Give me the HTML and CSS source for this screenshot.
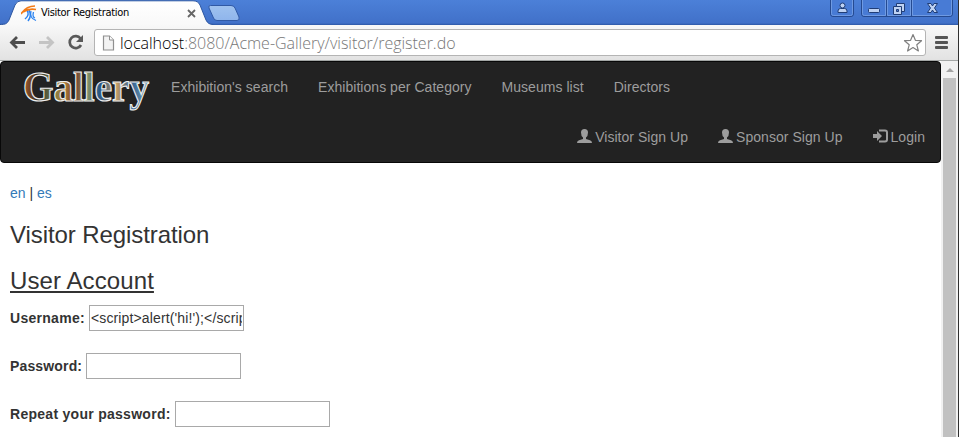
FILE: index.html
```html
<!DOCTYPE html>
<html lang="en">
<head>
<meta charset="utf-8">
<title>Visitor Registration</title>
<link rel="stylesheet" href="styles.css">
</head>
<body>
<div class="window">
  <header class="titlebar">
    <svg class="tab-shape" width="245" height="26" viewBox="0 0 245 26">
      <defs>
        <linearGradient id="tab" x1="0" y1="0" x2="0" y2="1"><stop offset="0" stop-color="#fff"/><stop offset="1" stop-color="#f8f8f8"/></linearGradient>
        <linearGradient id="newtab" x1="0" y1="0" x2="0" y2="1"><stop offset="0" stop-color="#9fc2ef"/><stop offset="1" stop-color="#8fb5ec"/></linearGradient>
      </defs>
      <path d="M0 24.5C5 24.5 7 24 9 20L15 5Q17 .8 21 .8H193Q198 .8 200 5L206 20Q208 24.5 213 24.5V26H0Z" fill="url(#tab)" stroke="#2d57a2"/>
      <path d="M0 25h214v1H0z" fill="#f8f8f8"/>
      <path d="M210.500 5.500H231Q234 5.500 235 8L239 17Q240 20.500 237 20.500H217Q214.500 20.500 213.500 18L209 8Q208 5.500 210.500 5.500Z" fill="url(#newtab)" stroke="#3059a5"/>
    </svg>
    <div class="tab">
      <svg class="favicon" width="17" height="17" viewBox="0 0 17 17" fill="none">
        <path d="M4 14Q9 10 6 5M7 16Q11 11 8 5" stroke="#2b83f0" stroke-width="1.500"/>
        <path d="M10 6Q8 13 15 15.500M12.500 7Q11 12 14 13" stroke="#2b83f0" stroke-width="1.300"/>
        <path d="M0 9Q5 1 14 1M2 7Q8 3 15 4.500" stroke="#f47b16" stroke-width="1.600"/>
      </svg>
      <span class="tab-title">Visitor Registration</span>
      <svg class="tab-close" width="9" height="9" viewBox="0 0 9 9"><path d="M1 1l7 7M8 1L1 8" stroke="#666" stroke-width="1.800"/></svg>
    </div>
    <svg class="window-buttons" width="130" height="18" viewBox="0 0 130 18">
      <g fill="#487bd5" stroke="#254a91">
        <path d="M1.500 -1V14Q1.500 16.500 4 16.500H22Q24.500 16.500 24.500 14V-1Z"/>
        <path d="M32.500 -1V14Q32.500 16.500 35 16.500H121Q123.500 16.500 123.500 14V-1Z"/>
        <path d="M57.500 0V16M82.500 0V16"/>
      </g>
      <g fill="none" stroke="#6f9ae2"><path d="M2.500 0V13.500Q2.500 15.500 4.500 15.500H21.500Q23.500 15.500 23.500 13.500V0M33.500 0V13.500Q33.500 15.500 35.500 15.500H56.500V0M58.500 0V15.500H81.500V0M83.500 0V15.500H120.500Q122.500 15.500 122.500 13.500V0"/></g>
      <g fill="#bed2f3" stroke="#203d76">
        <circle cx="13.500" cy="5.500" r="2.500"/><path d="M9 12.500V11Q9 8.500 11.500 8.500H15.500Q18 8.500 18 11V12.500Z"/>
        <rect x="39.500" y="8.500" width="11" height="4" rx="1"/>
        <path d="M67.500 3.500H75.500V11.500H67.500Z"/><path d="M64.500 6.500H72.500V14.500H64.500Z"/><path d="M67.500 9.500H69.500V11.500H67.500Z" fill="#487bd5"/>
        <path d="M98.500 3.500H102L103.500 6L105 3.500H108.500L105.500 8L108.500 12.500H105L103.500 10L102 12.500H98.500L101.500 8Z"/>
      </g>
    </svg>
  </header>
  <div class="toolbar">
    <svg class="nav-icons" width="94" height="35" viewBox="0 0 94 35" fill="none">
      <path d="M25 17.500H12M17 12l-5.500 5.500L17 23" stroke="#4d4d4d" stroke-width="2.800"/>
      <path d="M39 17.500H52M47 12l5.500 5.500L47 23" stroke="#c4c4c4" stroke-width="2.800"/>
      <path d="M80.500 13.500A6 6 0 1 0 81 20" stroke="#595959" stroke-width="2.700"/><path d="M83 10V17H76Z" fill="#595959"/>
    </svg>
    <div class="address">
      <svg class="page-icon" width="13" height="16" viewBox="0 0 13 16"><path d="M1.500 1H7.500L11.500 5V15H1.500Z" fill="#f3f3f3" stroke="#909090" stroke-width="1.200"/><path d="M7.500 1V5H11.500" fill="#fff" stroke="#909090"/></svg>
      <span class="url"><span class="host">localhost</span>:8080/Acme-Gallery/visitor/register.do</span>
      <svg class="star" width="20" height="20" viewBox="0 0 20 20"><path d="M10 1.500L12.400 7.300L18.500 7.700L13.800 11.800L15.400 18L10 14.600L4.600 18L6.200 11.800L1.500 7.700L7.600 7.300Z" fill="#fff" stroke="#808080" stroke-width="1.200" stroke-linejoin="round"/></svg>
    </div>
    <svg class="menu-icon" width="14" height="14" viewBox="0 0 14 14" fill="#555"><rect y="0" width="13" height="3" rx="1"/><rect y="5" width="13" height="3" rx="1"/><rect y="10" width="13" height="3" rx="1"/></svg>
  </div>
  <div class="viewport">
    <main class="page">
      <nav class="navbar">
        <div class="nav-row">
          <svg class="logo" width="150" height="50" viewBox="0 0 150 50">
            <defs><linearGradient id="art" gradientUnits="userSpaceOnUse" x1="22" y1="0" x2="148" y2="6"><stop offset="0" stop-color="#b8632d"/><stop offset=".12" stop-color="#342b20"/><stop offset=".24" stop-color="#67764c"/><stop offset=".33" stop-color="#b48336"/><stop offset=".42" stop-color="#713e2c"/><stop offset=".51" stop-color="#8d9663"/><stop offset=".62" stop-color="#255789"/><stop offset=".75" stop-color="#c79c61"/><stop offset=".86" stop-color="#315f91"/><stop offset="1" stop-color="#6f9cb1"/></linearGradient></defs>
            <text class="logo-text" x="22" y="39" textLength="126" lengthAdjust="spacingAndGlyphs" fill="url(#art)">Gallery</text>
          </svg>
          <a class="nav-link">Exhibition's search</a><a class="nav-link">Exhibitions per Category</a><a class="nav-link">Museums list</a><a class="nav-link">Directors</a>
        </div>
        <div class="nav-row nav-right">
          <a class="nav-link"><svg class="glyph" width="15" height="14" viewBox="0 0 15 14"><path d="M4 3.500Q4 0 7.500 0T11 3.500Q11 7 9 8.500V10L13 11.300Q15 12 15 14H0Q0 12 2 11.300L6 10V8.500Q4 7 4 3.500Z" fill="#9d9d9d"/></svg>Visitor Sign Up</a>
          <a class="nav-link"><svg class="glyph" width="15" height="14" viewBox="0 0 15 14"><path d="M4 3.500Q4 0 7.500 0T11 3.500Q11 7 9 8.500V10L13 11.300Q15 12 15 14H0Q0 12 2 11.300L6 10V8.500Q4 7 4 3.500Z" fill="#9d9d9d"/></svg>Sponsor Sign Up</a>
          <a class="nav-link"><svg class="glyph" width="15" height="14" viewBox="0 0 15 14"><path d="M0 5H4V2L9 7L4 12V9H0Z" fill="#9d9d9d"/><path d="M6 1.500H12Q14 1.500 14 3.500V10.500Q14 12.500 12 12.500H6" fill="none" stroke="#9d9d9d" stroke-width="2"/></svg>Login</a>
        </div>
      </nav>
      <div class="content">
        <div class="languages"><a class="lang">en</a> | <a class="lang">es</a></div>
        <h1 class="title">Visitor Registration</h1>
        <h2 class="title section">User Account</h2>
        <form>
          <div class="field"><label class="label" for="user">Username:</label><input class="input" id="user" value="&lt;script&gt;alert('hi!');&lt;/script&gt;"></div>
          <div class="field"><label class="label label-pass" for="pass">Password:</label><input class="input" id="pass" type="password"></div>
          <div class="field"><label class="label label-repeat" for="repeat">Repeat your password:</label><input class="input" id="repeat" type="password"></div>
        </form>
      </div>
    </main>
    <div class="scrollbar"><span class="arrow"></span><span class="thumb"></span></div>
  </div>
</div>
</body>
</html>
```
FILE: styles.css
```css
* { box-sizing: border-box; }
body { margin: 0; overflow: hidden; font: 14px/20px "Liberation Sans", sans-serif; color: #333; background: #fff; }
.window { width: 959px; height: 437px; overflow: hidden; display: flex; flex-direction: column; border-right: 1px solid #303030; }
.titlebar { position: relative; flex: 0 0 25px; display: flex; justify-content: space-between; background: linear-gradient(#4c80d8, #4171c9 92%, #2d57a5); }
.tab-shape { position: absolute; left: 0; top: 0; }
.tab { position: relative; display: flex; align-items: center; width: 200px; height: 25px; padding-left: 21px; }
.favicon { flex: none; margin-top: 1px; }
.tab-title { width: 93px; margin-left: 3px; font: 11px/16px "DejaVu Sans Condensed", sans-serif; letter-spacing: -.3px; white-space: nowrap; color: #000; margin-top: 1px; }
.tab-close { margin-left: 53px; margin-top: 1px; }
.window-buttons { margin-right: -1px; }
.toolbar { position: relative; flex: 0 0 36px; display: flex; align-items: center; background: linear-gradient(#f8f8f8, #e2e2e2); border-bottom: 1px solid #a3a6a5; }
.nav-icons { flex: none; }
.address { flex: none; display: flex; align-items: center; width: 832px; height: 27px; border: 1px solid #b4b4b4; border-radius: 3px; background: #fff; padding: 0 2px 0 7px; }
.page-icon { flex: none; }
.url { margin-left: 5px; font: 300 16px/24px "Open Sans", sans-serif; letter-spacing: -.02px; white-space: nowrap; color: #777; }
.host { color: #000; }
.star { margin-left: auto; }
.menu-icon { margin-left: 9px; }
.viewport { flex: 1; min-height: 0; display: flex; }
.page { width: 941px; }
.navbar { height: 102px; background: #222; border: 1px solid #080808; border-radius: 4px; }
.nav-row { display: flex; height: 50px; }
.logo { margin-right: 6px; }
.logo-text { font: bold 43px "Liberation Serif", serif; stroke: #eee; stroke-width: 1.2px; }
.nav-link { padding: 15px; color: #9d9d9d; white-space: nowrap; letter-spacing: .04px; }
.logo + .nav-link { padding-left: 14px; }
.nav-right { justify-content: flex-end; }
.glyph { margin-right: 3px; vertical-align: -1px; }
.content { padding: 20px 10px; }
.languages { height: 20px; }
.lang { color: #337ab7; }
.title { font-size: 24px; line-height: 26px; font-weight: 400; margin: 19px 0 0; letter-spacing: -.08px; }
.section { margin: 20px 0 11px; letter-spacing: .1px; text-decoration: underline; }
.field { display: flex; align-items: center; height: 26px; margin-bottom: 22px; }
.label { width: 75px; margin-right: 4px; white-space: nowrap; font-weight: 700; letter-spacing: .28px; }
.label-pass { width: 72px; letter-spacing: .15px; }
.label-repeat { width: 161px; }
.input { width: 155px; height: 26px; border: 1px solid #a9a9a9; border-radius: 0; padding: 1px; background: #fff; color: #333; font: 14px "Liberation Sans", sans-serif; letter-spacing: .13px; outline: none; }
.scrollbar { width: 17px; display: flex; flex-direction: column; align-items: center; background: #f1f1f1; }
.arrow { margin: 7px 0 6px; border: 4px solid transparent; border-top: 0; border-bottom-color: #a3a3a3; }
.thumb { flex: 1; width: 13px; background: #c1c1c1; }
```
